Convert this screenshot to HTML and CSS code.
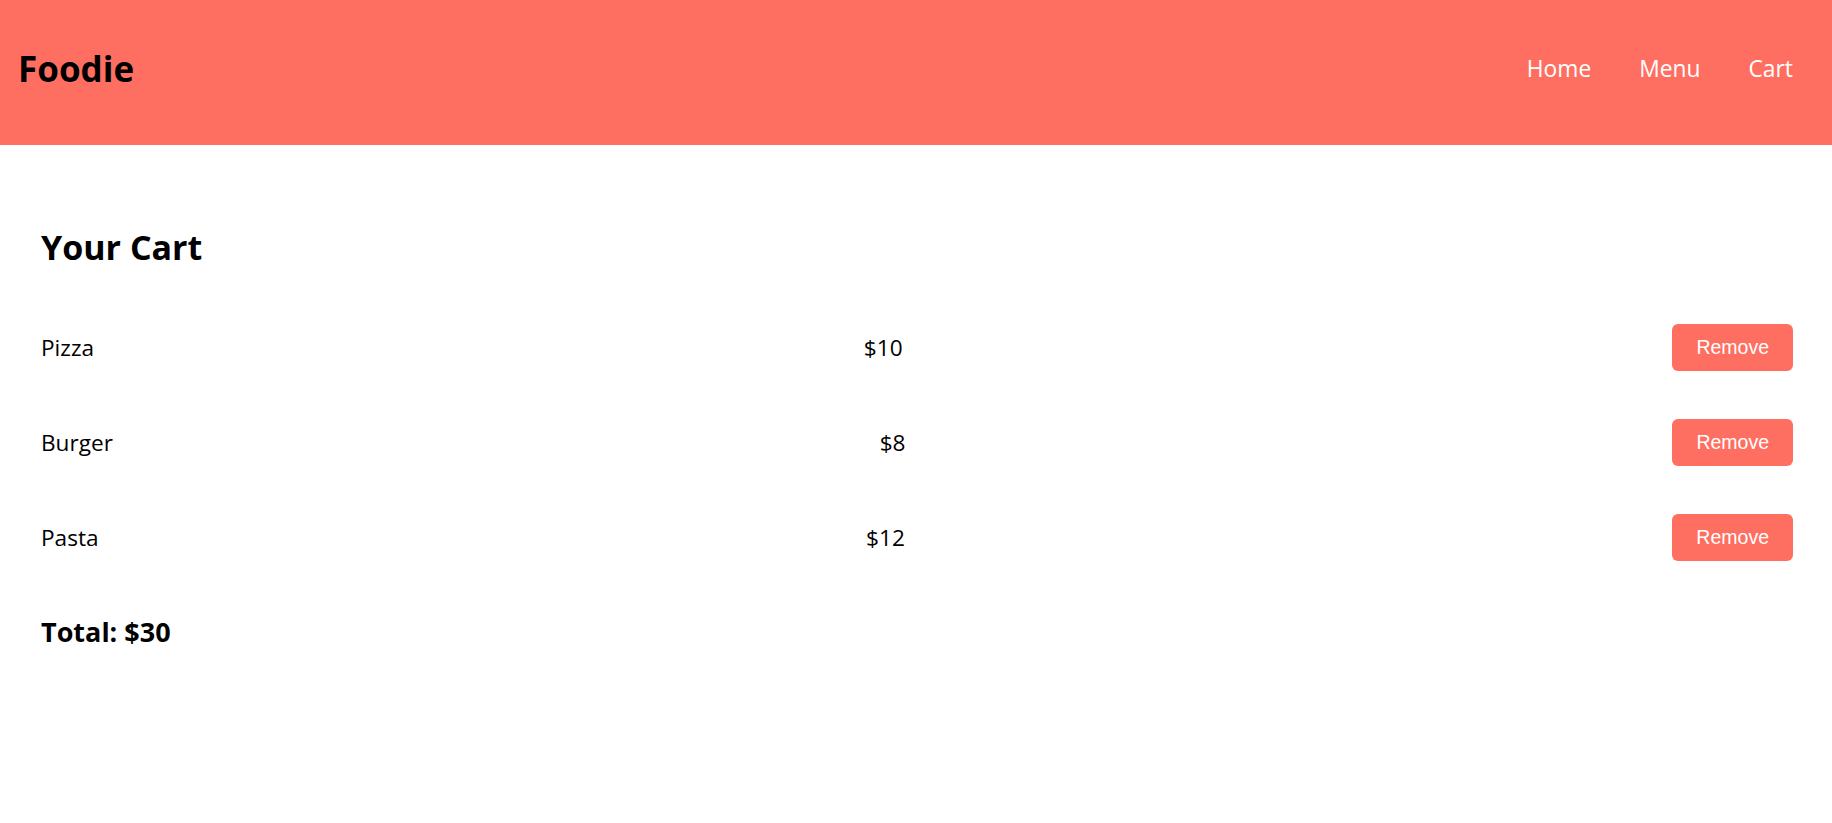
FILE: index.html
```html
<!DOCTYPE html>
<html lang="en">
<head>
<meta charset="utf-8">
<title>Foodie - Cart</title>
<link rel="stylesheet" href="styles.css">
</head>
<body>
<header class="site-header">
  <div class="logo">Foodie</div>
  <nav class="nav">
    <a href="#" class="nav-link">Home</a>
    <a href="#" class="nav-link">Menu</a>
    <a href="#" class="nav-link">Cart</a>
  </nav>
</header>
<main class="cart">
  <h2 class="cart-title">Your Cart</h2>
  <div class="cart-items">
    <div class="cart-item">
      <span class="item-name">Pizza</span>
      <span class="item-price">$10</span>
      <button class="remove-btn">Remove</button>
    </div>
    <div class="cart-item">
      <span class="item-name">Burger</span>
      <span class="item-price">$8</span>
      <button class="remove-btn">Remove</button>
    </div>
    <div class="cart-item">
      <span class="item-name">Pasta</span>
      <span class="item-price">$12</span>
      <button class="remove-btn">Remove</button>
    </div>
  </div>
  <div class="cart-total">Total: $30</div>
</main>
</body>
</html>
```
FILE: styles.css
```css
* {
  box-sizing: border-box;
}

body {
  margin: 0;
  font-family: "Open Sans", "Noto Sans", sans-serif;
  color: #000;
  background: #fff;
}

.site-header {
  height: 145px;
  background: #ff6f61;
  display: flex;
  align-items: center;
  justify-content: space-between;
  padding: 0 39px 7px 18px;
}

.logo {
  font-size: 35px;
  font-weight: 700;
  line-height: 48px;
}

.nav {
  display: flex;
  gap: 48px;
}

.nav-link {
  color: #fff;
  text-decoration: none;
  font-size: 22.8px;
  line-height: 30px;
  margin-bottom: 1px;
}

.cart {
  padding: 78px 39px 0 41px;
}

.cart-title {
  margin: 0 0 29px;
  font-size: 34px;
  font-weight: 700;
  line-height: 48px;
}

.cart-item {
  display: flex;
  justify-content: space-between;
  align-items: center;
  padding: 24px 0;
  font-size: 22.6px;
  line-height: 30px;
}

.remove-btn {
  background: #ff6f61;
  color: #fff;
  border: none;
  border-radius: 6px;
  font-family: "Liberation Sans", Arial, sans-serif;
  font-size: 19.5px;
  line-height: 23px;
  padding: 12px 24px;
  cursor: pointer;
}

.cart-total {
  margin-top: 29px;
  font-size: 27px;
  font-weight: 700;
  line-height: 36px;
}
```
